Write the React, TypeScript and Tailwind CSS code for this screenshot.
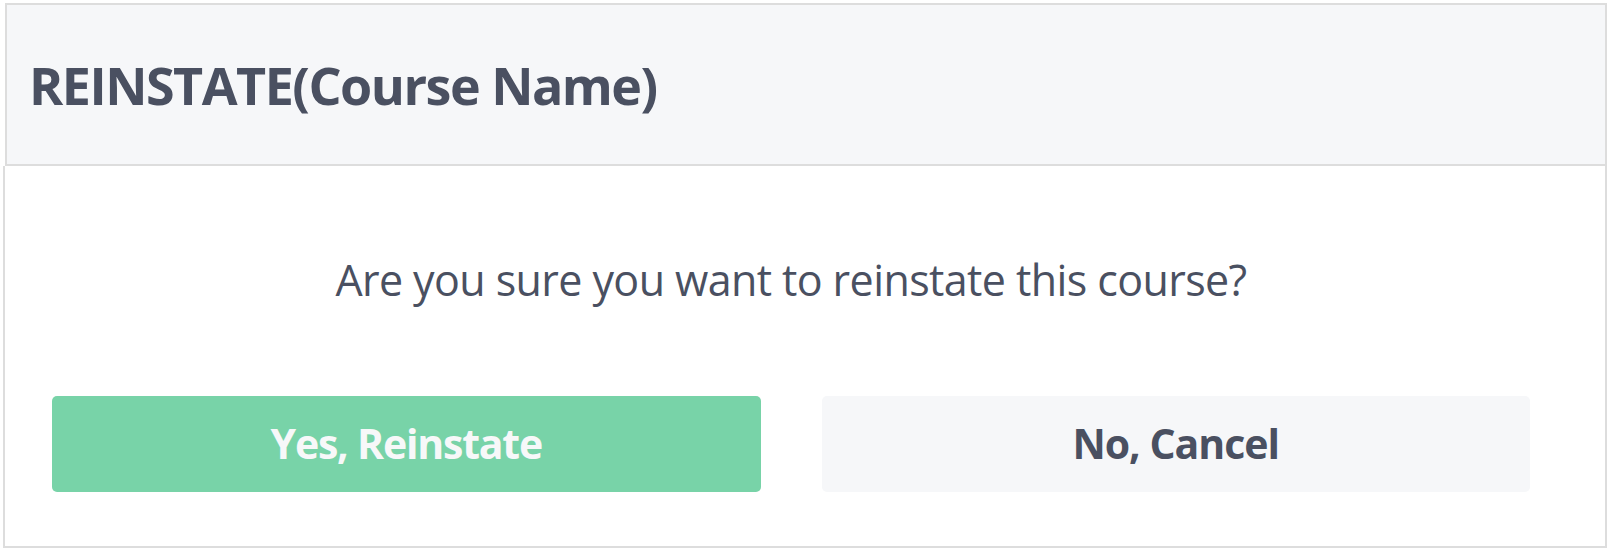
import React from 'react';

export default function App() {
  return (
    <div
      className="w-[1610px] h-[550px] bg-white pt-[3px] pl-[3px] pr-[3px] text-[#4a5061]"
      style={{ fontFamily: '"Open Sans", "Noto Sans", sans-serif' }}
    >
      {/* Header */}
      <div className="ml-[2px] h-[163px] flex items-center pl-[22px] bg-[#f6f7f9] border-2 border-[#dddddd]">
        <h1 className="text-[52px] font-bold tracking-[-1.5px] leading-none">REINSTATE(Course Name)</h1>
      </div>

      {/* Body */}
      <div className="h-[382px] border-2 border-t-0 border-[#dddddd] pl-[47px] pr-[75px] pt-[92px]">
        <p className="text-center text-[43px] leading-none tracking-[-0.6px]">
          Are you sure you want to reinstate this course?
        </p>
        <div className="mt-[95px] grid grid-cols-2 gap-[61px]">
          <button
            type="button"
            className="h-[96px] rounded-[5px] bg-[#78d3a8] text-[#f7f8f9] text-[41px] font-bold tracking-[-1.2px]"
          >
            Yes, Reinstate
          </button>
          <button
            type="button"
            className="h-[96px] rounded-[5px] bg-[#f6f7f9] text-[#4a5061] text-[41px] font-bold tracking-[-1px]"
          >
            No, Cancel
          </button>
        </div>
      </div>
    </div>
  );
}
